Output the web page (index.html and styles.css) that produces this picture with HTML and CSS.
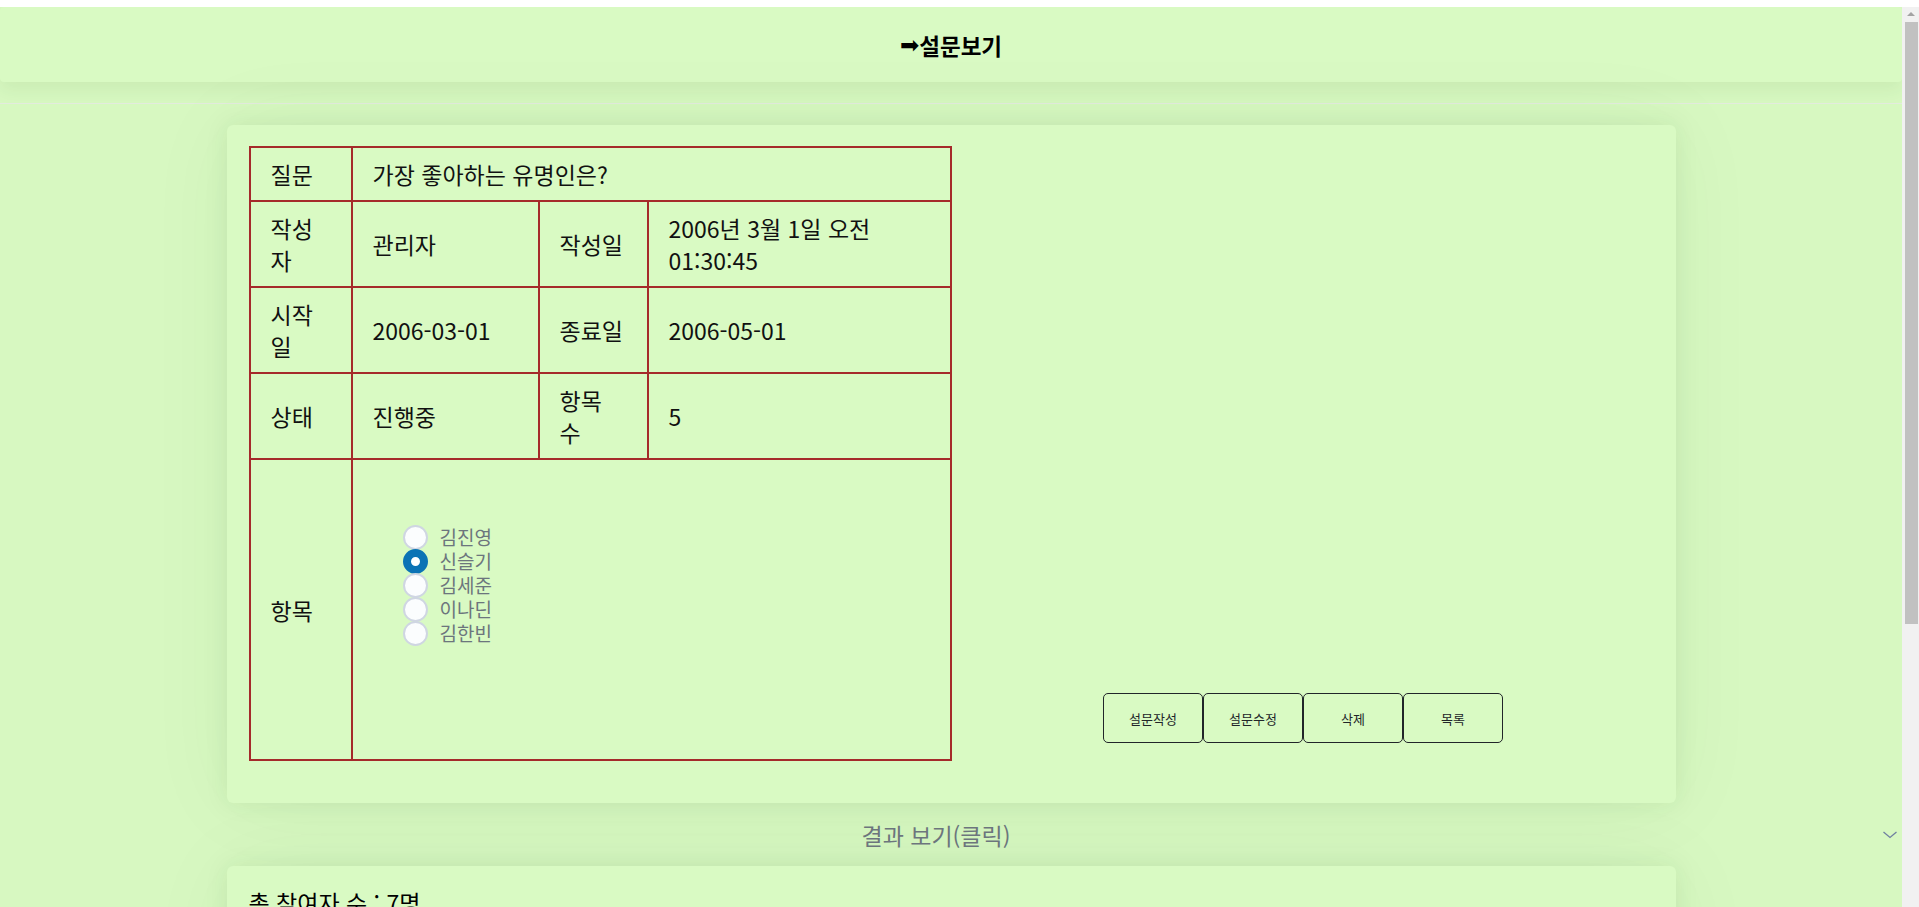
FILE: index.html
```html
<!DOCTYPE html>
<html lang="ko">
<head>
<meta charset="utf-8">
<title>설문보기</title>
<link rel="stylesheet" href="styles.css">
</head>
<body>
<header class="topbar">
  <h1 class="title"><span class="arrow">➡</span>설문보기</h1>
</header>
<main class="main">
  <section class="card">
    <table class="survey">
      <colgroup>
        <col class="c1"><col class="c2"><col class="c3"><col class="c4">
      </colgroup>
      <tr><th>질문</th><td colspan="3">가장 좋아하는 유명인은?</td></tr>
      <tr><th>작성자</th><td>관리자</td><th>작성일</th><td>2006년 3월 1일 오전<br>01:30:45</td></tr>
      <tr><th>시작일</th><td>2006-03-01</td><th>종료일</th><td>2006-05-01</td></tr>
      <tr><th>상태</th><td>진행중</td><th>항목 수</th><td>5</td></tr>
      <tr>
        <th>항목</th>
        <td colspan="3" class="items">
          <div class="options">
            <label class="option"><input type="radio" name="pick" class="radio"><span>김진영</span></label>
            <label class="option"><input type="radio" name="pick" class="radio" checked><span>신슬기</span></label>
            <label class="option"><input type="radio" name="pick" class="radio"><span>김세준</span></label>
            <label class="option"><input type="radio" name="pick" class="radio"><span>이나딘</span></label>
            <label class="option"><input type="radio" name="pick" class="radio"><span>김한빈</span></label>
          </div>
        </td>
      </tr>
    </table>
    <div class="actions">
      <button class="btn" type="button">설문작성</button>
      <button class="btn" type="button">설문수정</button>
      <button class="btn" type="button">삭제</button>
      <button class="btn" type="button">목록</button>
    </div>
  </section>
  <button class="toggle" type="button">
    <span class="toggle-text">결과 보기(클릭)</span>
    <svg class="chevron" width="16" height="10" viewBox="0 0 16 10"><polyline points="1.5,2 8,7.5 14.5,2" fill="none" stroke="#6f7fa0" stroke-width="1.3"/></svg>
  </button>
  <section class="card result">
    <p class="total">총 참여자 수 : 7명</p>
  </section>
</main>
<div class="scrollbar" aria-hidden="true">
  <span class="sb-up"></span>
  <span class="sb-thumb"></span>
</div>
</body>
</html>
```

FILE: styles.css
```css
html {
  background: #ffffff;
}
body {
  margin: 7px 17px 0 0;
  background: #d7f8c1;
  font-family: "Noto Sans CJK KR", "Noto Sans", sans-serif;
  color: #111;
}
.scrollbar {
  position: fixed;
  top: 7px;
  right: 0;
  bottom: 0;
  width: 17px;
  background: #f1f1f1;
  display: flex;
  flex-direction: column;
  align-items: center;
}
.sb-up {
  width: 0;
  height: 0;
  margin: 5px 0 6px;
  border-left: 4px solid transparent;
  border-right: 4px solid transparent;
  border-bottom: 4px solid #a3a3a3;
}
.sb-thumb {
  width: 13px;
  height: 602px;
  margin-left: 2px;
  background: #c1c1c1;
}
.topbar {
  height: 75px;
  background: #d9fac3;
  border-radius: 4px;
  box-shadow: 0 8px 18px rgba(40, 80, 20, 0.07);
  display: flex;
  align-items: center;
  justify-content: center;
}
.title {
  margin: 0;
  font-size: 22.5px;
  font-weight: 700;
  line-height: 30px;
  color: #000;
  display: flex;
  align-items: center;
}
.arrow {
  font-family: "DejaVu Sans", sans-serif;
  font-size: 23px;
  font-weight: 400;
}
.main {
  margin-top: 21px;
  border-top: 1px solid #e3ebde;
  padding-top: 21px;
  padding-bottom: 40px;
}
.card {
  width: 1449px;
  box-sizing: border-box;
  margin: 0 auto;
  background: #d9fac3;
  border-radius: 6px;
  box-shadow: 0 0 24px rgba(40, 80, 20, 0.08), 0 0 90px rgba(40, 80, 20, 0.05);
  padding: 21px 21px 42px 22px;
  display: flex;
}
.survey {
  width: 50%;
  border-collapse: collapse;
  table-layout: fixed;
  font-size: 23px;
  line-height: 32px;
}
.c1 { width: 102px; }
.c2 { width: 187px; }
.c3 { width: 109px; }
.survey th,
.survey td {
  border: 2px solid #a52a2a;
  padding: 10px 20px;
  text-align: left;
  font-weight: 400;
  vertical-align: middle;
}
.survey .items {
  height: 301px;
  box-sizing: border-box;
  padding: 65px 20px 111px 50px;
  vertical-align: top;
}
.options {
  display: flex;
  flex-direction: column;
}
.option {
  display: flex;
  align-items: center;
  gap: 12px;
  height: 24px;
  font-size: 19px;
  line-height: 24px;
  color: #6c757d;
}
.radio {
  appearance: none;
  -webkit-appearance: none;
  margin: 0;
  width: 25px;
  height: 25px;
  flex: none;
  box-sizing: border-box;
  border-radius: 50%;
  border: 2px solid #cfd6e2;
  background: #fbfdfe;
}
.radio:checked {
  border: 8px solid #0b73b5;
  background: #ffffff;
}
.actions {
  flex: 1;
  display: flex;
  justify-content: center;
  align-items: flex-end;
  padding-bottom: 18px;
}
.btn {
  width: 100px;
  height: 50px;
  box-sizing: border-box;
  border: 1px solid #212529;
  border-radius: 5px;
  background: transparent;
  color: #212529;
  font-family: "Noto Sans CJK KR", "Noto Sans", sans-serif;
  font-size: 13px;
  padding: 0;
}
.toggle {
  display: flex;
  align-items: center;
  width: 100%;
  height: 63px;
  border: 0;
  background: transparent;
  padding: 0 4px 0 0;
  margin: 0;
  font-family: "Noto Sans CJK KR", "Noto Sans", sans-serif;
  cursor: pointer;
}
.toggle-text {
  flex: 1;
  text-align: center;
  font-size: 23px;
  line-height: 30px;
  color: #6c757d;
}
.chevron {
  margin-left: 10px;
  flex: none;
}
.result {
  display: block;
  min-height: 390px;
  padding-top: 21px;
}
.total {
  margin: 0;
  font-size: 23px;
  line-height: 30px;
  color: #000;
}
```
